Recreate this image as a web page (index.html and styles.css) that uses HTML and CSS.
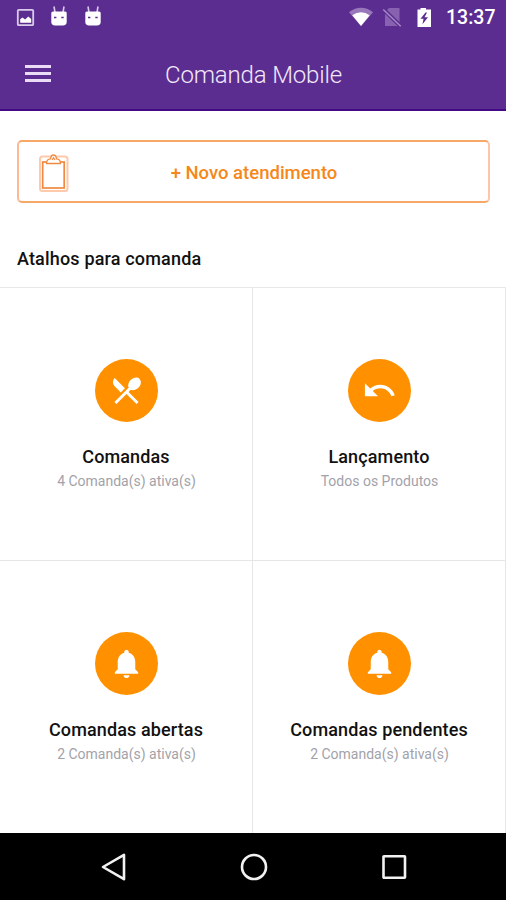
FILE: index.html
```html
<!DOCTYPE html>
<html lang="pt-BR">
<head>
<meta charset="utf-8">
<title>Comanda Mobile</title>
<link rel="stylesheet" href="styles.css">
</head>
<body>
<header class="top">
  <div class="status">
    <svg class="status-left" width="90" height="24" viewBox="0 0 90 24">
      <rect x="1.8" y="1.8" width="15.4" height="15.4" rx="1" fill="none" stroke="#d9cbe9" stroke-width="1.8"/>
      <path d="M4.2 14.8v-3.6l2.3-1.700 2.600 2 3.200-3 2.900 2.600v3.700z" fill="#fff"/>
      <g id="droid">
        <path d="M38 -1.500l1 6M48 -1.500l-1 6" stroke="#d9cbe9" stroke-width="1.600"/>
        <path d="M35.300 5q0-1.500 1.500-1.500h12.400q1.500 0 1.500 1.500v8.700q0 3.800-3.800 3.800h-7.800q-3.800 0-3.800-3.800z" fill="#fff"/>
        <path d="M38 9.500h2.400M45.300 9.500h2.400" stroke="#5c2d91" stroke-width="1.300"/>
      </g>
      <use href="#droid" x="34"/>
    </svg>
    <svg class="status-right" width="90" height="24" viewBox="0 0 90 24">
      <path d="M1 6.2Q13 -2.5 25 6.2L13 20z" fill="#9878ba"/>
      <path d="M4.3 9.200Q13 3.400 21.700 9.200L13 20z" fill="#fff"/>
      <path d="M41 2h10.500v18H37V6z" fill="#8862b0"/>
      <path d="M34.500 2.500L53 20.500" stroke="#5c2d91" stroke-width="4"/>
      <path d="M35.200 3.500L52.700 20.300" stroke="#a68ac6" stroke-width="1.500"/>
      <path d="M69.500 3.500h3V2h5.500v1.500h5v17.500h-13.500z" fill="#fff"/>
      <path d="M77.500 6.500l-5 6.300h3l-1 5.400 5.500-7h-3.500l2.500-4.700z" fill="#5c2d91"/>
    </svg>
    <span class="clock">13:37</span>
  </div>
  <div class="appbar">
    <div class="menu"><i></i><i></i><i></i></div>
    <h1>Comanda Mobile</h1>
  </div>
</header>
<main>
  <div class="novo">
    <svg width="32" height="40" viewBox="0 0 32 40">
      <rect x="2" y="3.500" width="27.500" height="34.500" rx="2.500" fill="none" stroke="#ffc9ac" stroke-width="2"/>
      <rect x="4.700" y="9" width="21.500" height="26" fill="#fff" stroke="#f08a42" stroke-width="1.700"/>
      <path d="M8.500 10.500q0-4.500 4-4.700Q13 2 15.500 2t3 3.800q4 .2 4 4.700z" fill="#fff" stroke="#f08a42" stroke-width="1.300"/>
      <path d="M14 7l1.500-2.300L17 7" fill="none" stroke="#f08a42" stroke-width="1.200"/>
    </svg>
    <span>+ Novo atendimento</span>
  </div>
  <h2>Atalhos para comanda</h2>
  <div class="grid">
    <section class="card">
      <div class="disc"><svg viewBox="0 0 24 24"><path d="M8.100 13.340l2.830-2.830L3.910 3.500c-1.560 1.560-1.560 4.090 0 5.660l4.190 4.180zm6.780-1.810c1.530.71 3.680.21 5.270-1.380 1.910-1.910 2.280-4.650.81-6.120-1.460-1.460-4.200-1.100-6.120.81-1.590 1.590-2.090 3.740-1.380 5.270L3.700 19.870l1.410 1.410L12 14.410l6.880 6.880 1.410-1.410L13.410 13l1.470-1.470z"/></svg></div>
      <h3>Comandas</h3><p>4 Comanda(s) ativa(s)</p>
    </section>
    <section class="card">
      <div class="disc"><svg viewBox="0 0 24 24"><path d="M12.500 8c-2.650 0-5.050.99-6.900 2.600L2 7v9h9l-3.620-3.620c1.390-1.160 3.160-1.880 5.120-1.880 3.540 0 6.550 2.310 7.600 5.500l2.370-.78C21.080 11.030 17.150 8 12.500 8z"/></svg></div>
      <h3>Lançamento</h3><p>Todos os Produtos</p>
    </section>
    <section class="card">
      <div class="disc"><svg viewBox="0 0 24 24"><path d="M12 22c1.100 0 2-.9 2-2h-4c0 1.100.89 2 2 2zm6-6v-5c0-3.070-1.640-5.640-4.500-6.320V4c0-.83-.67-1.500-1.500-1.500s-1.500.67-1.500 1.500v.68C7.630 5.360 6 7.920 6 11v5l-2 2v1h16v-1l-2-2z"/></svg></div>
      <h3>Comandas abertas</h3><p>2 Comanda(s) ativa(s)</p>
    </section>
    <section class="card">
      <div class="disc"><svg viewBox="0 0 24 24"><path d="M12 22c1.100 0 2-.9 2-2h-4c0 1.100.89 2 2 2zm6-6v-5c0-3.070-1.640-5.640-4.500-6.320V4c0-.83-.67-1.500-1.500-1.500s-1.500.67-1.500 1.500v.68C7.630 5.360 6 7.920 6 11v5l-2 2v1h16v-1l-2-2z"/></svg></div>
      <h3>Comandas pendentes</h3><p>2 Comanda(s) ativa(s)</p>
    </section>
  </div>
</main>
<nav class="nav">
  <svg width="28" height="30" viewBox="0 0 28 30"><path d="M3 15L24 2.800v24.400z"/></svg>
  <svg width="28" height="30" viewBox="0 0 28 30"><circle cx="14" cy="15" r="12"/></svg>
  <svg width="28" height="30" viewBox="0 0 28 30"><rect x="3.500" y="4.300" width="21.500" height="21.500" rx=".5"/></svg>
</nav>
</body>
</html>
```
FILE: styles.css
```css
* { box-sizing: border-box; }
body { margin: 0; width: 506px; height: 900px; overflow: hidden; background: #fff; font-family: Roboto, "Liberation Sans", sans-serif; display: flex; flex-direction: column; }
h1, h2, h3, p { margin: 0; white-space: nowrap; }
svg { display: block; flex: none; overflow: visible; }
.top { height: 111px; background: #5c2d91; border-bottom: 2px solid #430a83; color: #fff; }
.status { height: 36px; display: flex; align-items: center; padding: 0 11px 0 16px; }
.status-left { margin-top: 3px; }
.status-right { margin-left: auto; margin-right: 8px; }
.clock { font-size: 19.5px; font-weight: 500; line-height: 24px; width: 49px; }
.appbar { height: 75px; display: grid; grid-template-columns: 26px 1fr 26px; align-items: center; padding: 0 24px 0 25px; }
.menu { display: grid; gap: 4px; }
.menu i { height: 3px; background: #eadcf7; }
h1 { padding-top: 2px; font-size: 24px; font-weight: 300; line-height: 30px; letter-spacing: -0.15px; text-align: center; color: #f2e9fb; }
main { flex: none; height: 722px; }
.novo { margin: 29px 16px 0 17px; height: 63px; border: 2px solid #f6a868; border-left-color: #fbb995; border-right-color: #fdc6a8; border-radius: 5px; display: grid; grid-template-columns: 32px 1fr 32px; align-items: center; padding: 2px 18px 0 19px; }
.novo span { text-align: center; color: #f5881a; font-size: 18.5px; font-weight: 500; line-height: 24px; }
h2 { margin: 44px 0 0 17px; height: 40px; font-size: 18px; font-weight: 500; line-height: 24px; letter-spacing: 0.17px; color: #111; }
.grid { display: grid; grid-template-columns: 253px 253px; grid-template-rows: 273px 273px; border-top: 1px solid #e8e8e8; }
.card { border-right: 1px solid #e6e6e6; border-bottom: 1px solid #e6e6e6; display: flex; flex-direction: column; align-items: center; padding-top: 71px; }
.disc { width: 63px; height: 63px; border-radius: 50%; background: #ff9100; display: grid; place-items: center; flex: none; }
.disc svg { width: 35px; height: 35px; fill: #fff; }
h3 { margin-top: 23px; font-size: 18px; font-weight: 500; line-height: 24px; letter-spacing: 0.12px; color: #111; }
.card p { margin-top: 2px; padding-left: 1px; font-size: 14px; line-height: 20px; color: #a2a2aa; }
.nav { height: 67px; background: #000; display: flex; justify-content: center; gap: 112px; padding: 19px 0 0 1px; }
.nav svg { fill: none; stroke: #f2f2f2; stroke-width: 2.6; stroke-linejoin: round; }
```
